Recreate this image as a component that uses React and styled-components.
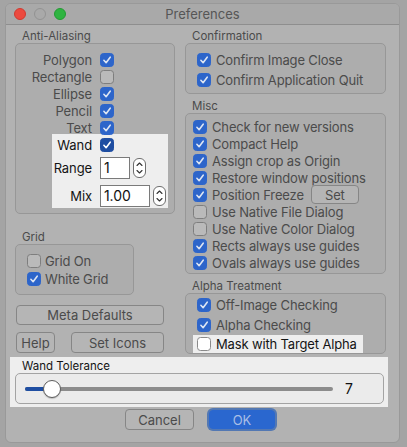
import React from 'react'
import styled, { createGlobalStyle } from 'styled-components'

const Global = createGlobalStyle`
    html, body {
        margin: 0;
        padding: 0;
        background: #a4a4a4;
        font-family: "Inter", "Liberation Sans", sans-serif;
    }
`

const Window = styled.div`
    --fg : #4b4b4b;
    --check : #2d65ca;
    --mark : #dde5f3;
    --box : #bababa;
    --boxline : #7e7e7e;

    margin : 3px 0 0 5px;
    width : 395px;
    box-sizing : border-box;
    background : #b2b2b2;
    border : 1px solid #999;
    border-radius : 6px;
    overflow : hidden;
    color : var(--fg);
`

const TitleBar = styled.div`
    position : relative;
    height : 20px;
    display : flex;
    align-items : center;
    justify-content : center;
    background : #a9a9a9;
    border-bottom : 1px solid #8e8e8e;
`

const Lights = styled.div`
    position : absolute;
    left : 8px;
    top : 4px;
    display : flex;
    gap : 8px;
`

const Light = styled.span`
    width : 12px;
    height : 12px;
    border-radius : 50%;
    box-sizing : border-box;
    background : ${p => p.$color};
    border : 1px solid ${p => p.$edge};
`

const Title = styled.span`
    font-size : 13px;
    color : #565656;
`

const Body = styled.div`
    padding : 4px 14px 12px 9px;
`

const Columns = styled.div`
    display : grid;
    grid-template-columns : 160px 201px;
    column-gap : 10px;
    align-items : start;
`

const Column = styled.div`
    display : flex;
    flex-direction : column;
`

const Legend = styled.div`
    font-size : 11.5px;
    line-height : 14px;
    padding-left : 7px;
    margin-top : ${p => p.$top || 0}px;
`

const Frame = styled.div`
    border : 1px solid #979797;
    border-radius : 5px;
    background : #adadad;
    width : ${p => p.$w ? p.$w + 'px' : 'auto'};
    box-sizing : border-box;
    padding : ${p => p.$pad};
`

const FormRow = styled.div`
    display : grid;
    grid-template-columns : ${p => p.$lw}px auto auto;
    column-gap : 8px;
    align-items : center;
    justify-content : start;
    height : ${p => p.$h || 17}px;
    margin-top : ${p => p.$top || 0}px;
    font-size : 13px;
    letter-spacing : -0.1px;
`

const FormLabel = styled.span`
    text-align : right;
`

const Spotlight = styled.div`
    --fg : #141414;
    --check : #1f4ea2;
    --mark : #ffffff;
    --box : #ffffff;
    --boxline : #8a8a8a;
    background : #eeeeee;
    color : var(--fg);
`

const AliasSpot = styled(Spotlight)`
    margin : -2px 6px 0 36px;
    padding : 2px 0 1px;
`

const Box = styled.span`
    width : 14px;
    height : 14px;
    flex : none;
    box-sizing : border-box;
    border-radius : 3.5px;
    display : inline-flex;
    align-items : center;
    justify-content : center;
    background : ${p => p.$on ? 'var(--check)' : 'var(--box)'};
    border : 1px solid ${p => p.$on ? 'var(--check)' : 'var(--boxline)'};
`

function Check({ on }) {
  return (
    <Box $on={on}>
      {on && (
        <svg width="10" height="10" viewBox="0 0 10 10">
          <path d="M1.9 5.3 L4.1 7.7 L8.2 2.2" fill="none" stroke="var(--mark)" strokeWidth="1.6" strokeLinecap="round" strokeLinejoin="round" />
        </svg>
      )}
    </Box>
  )
}

const Option = styled.div`
    display : flex;
    align-items : center;
    gap : ${p => p.$gap || 5}px;
    height : ${p => p.$h || 17}px;
    font-size : 13px;
    letter-spacing : -0.15px;
    white-space : nowrap;
`

const Field = styled.div`
    width : ${p => p.$w}px;
    height : 22px;
    box-sizing : border-box;
    border : 1px solid #7a7a7a;
    background : #fff;
    font-size : 14px;
    line-height : 20px;
    padding-left : 3px;
    color : #111;
`

const StepperBox = styled.div`
    width : 13px;
    height : 20px;
    box-sizing : border-box;
    border : 1px solid #6e6e6e;
    border-radius : 6px;
    background : #fff;
    margin-left : -5px;
    display : flex;
`

function Stepper() {
  return (
    <StepperBox>
      <svg width="11" height="18" viewBox="0 0 11 18">
        <path d="M3 6.5 L5.5 4 L8 6.5 M3 11.5 L5.5 14 L8 11.5" fill="none" stroke="#333" strokeWidth="1.1" strokeLinecap="round" strokeLinejoin="round" />
      </svg>
    </StepperBox>
  )
}

const Button = styled.div`
    width : ${p => p.$w}px;
    height : ${p => p.$h || 20}px;
    box-sizing : border-box;
    border : 1px solid #868686;
    border-radius : 4px;
    background : #b5b5b5;
    display : flex;
    align-items : center;
    justify-content : center;
    font-size : 13px;
    color : #4b4b4b;
    flex : none;
    margin-left : ${p => p.$left || 0}px;
`

const ButtonRow = styled.div`
    display : flex;
    justify-content : ${p => p.$justify || 'flex-start'};
    gap : ${p => p.$gap}px;
    margin : ${p => p.$margin};
`

const MaskSpot = styled(Spotlight)`
    margin-left : -4px;
    width : 166px;
    padding-left : 4px;
`

const ToleranceSpot = styled(Spotlight)`
    margin : 3px -3px 0 -5px;
    padding : 2px 4px 3px 5px;
`

const SliderFrame = styled.div`
    height : 31px;
    box-sizing : border-box;
    border : 1px solid #a3a3a3;
    border-radius : 5px;
    background : #ebebeb;
    display : flex;
    align-items : center;
    padding-left : 9px;
    gap : 12px;
`

const Track = styled.div`
    position : relative;
    width : 308px;
    height : 4px;
    border-radius : 2px;
    background : #8c8c8c;
`

const Fill = styled.div`
    height : 100%;
    border-radius : 2px;
    background : #1f4ea2;
`

const Thumb = styled.div`
    position : absolute;
    top : 50%;
    width : 18px;
    height : 18px;
    box-sizing : border-box;
    border-radius : 50%;
    background : #fff;
    border : 1px solid #5d5d5d;
    transform : translate(-50%, -50%);
    box-shadow : 0 1px 1px rgba(0, 0, 0, 0.2);
`

const Value = styled.span`
    font-size : 14px;
    color : #111;
`

const PrimaryButton = styled(Button)`
    background : #2a67cf;
    border-color : #2a67cf;
    color : #a9bfe6;
    box-shadow : 0 0 0 2px #5378b3;
`

function Slider({ value, max }) {
  const pos = (value / max) * 100
  return (
    <SliderFrame>
      <Track>
        <Fill style={{ width: pos + '%' }} />
        <Thumb style={{ left: pos + '%' }} />
      </Track>
      <Value>{value}</Value>
    </SliderFrame>
  )
}

const antiAlias = [
  ['Polygon', true],
  ['Rectangle', false],
  ['Ellipse', true],
  ['Pencil', true],
  ['Text', true],
]

const misc = [
  ['Check for new versions', true],
  ['Compact Help', true],
  ['Assign crop as Origin', true],
  ['Restore window positions', true],
  ['Position Freeze', true, true],
  ['Use Native File Dialog', false],
  ['Use Native Color Dialog', false],
  ['Rects always use guides', true],
  ['Ovals always use guides', true],
]

export default function App() {
  return (
    <>
      <Global />
      <Window>
        <TitleBar>
          <Lights>
            <Light $color="#ec4a3f" $edge="#d03a30" />
            <Light $color="#a9a9a9" $edge="#939393" />
            <Light $color="#2fb441" $edge="#239a33" />
          </Lights>
          <Title>Preferences</Title>
        </TitleBar>
        <Body>
          <Columns>
            <Column>
              <Legend>Anti-Aliasing</Legend>
              <Frame $pad="7px 0 5px">
                {antiAlias.map(([name, on]) => (
                  <FormRow key={name} $lw={76}>
                    <FormLabel>{name}</FormLabel>
                    <Check on={on} />
                  </FormRow>
                ))}
                <AliasSpot>
                  <FormRow $lw={40}>
                    <FormLabel>Wand</FormLabel>
                    <Check on />
                  </FormRow>
                  <FormRow $lw={40} $h={22} $top={4}>
                    <FormLabel>Range</FormLabel>
                    <Field $w={30}>1</Field>
                    <Stepper />
                  </FormRow>
                  <FormRow $lw={40} $h={22} $top={6}>
                    <FormLabel>Mix</FormLabel>
                    <Field $w={50}>1.00</Field>
                    <Stepper />
                  </FormRow>
                </AliasSpot>
              </Frame>

              <Legend $top={16}>Grid</Legend>
              <Frame $w={119} $pad="7px 0 6px 11px">
                <Option $h={18} $gap={4}><Check on={false} />Grid On</Option>
                <Option $h={18} $gap={4}><Check on />White Grid</Option>
              </Frame>

              <ButtonRow $margin="10px 0 0 1px">
                <Button $w={148}>Meta Defaults</Button>
              </ButtonRow>
              <ButtonRow $gap={16} $margin="7px 0 0 1px">
                <Button $w={39} $h={21}>Help</Button>
                <Button $w={93} $h={21}>Set Icons</Button>
              </ButtonRow>
            </Column>

            <Column>
              <Legend>Confirmation</Legend>
              <Frame $pad="6px 0 3px 11px">
                <Option $h={20}><Check on />Confirm Image Close</Option>
                <Option $h={20}><Check on />Confirm Application Quit</Option>
              </Frame>

              <Legend $top={5}>Misc</Legend>
              <Frame $pad="4px 0 2px 7px">
                {misc.map(([name, on, set]) => (
                  <Option key={name}>
                    <Check on={on} />
                    {name}
                    {set && <Button $w={48} $h={19} $left={2}>Set</Button>}
                  </Option>
                ))}
              </Frame>

              <Legend $top={5}>Alpha Treatment</Legend>
              <Frame $pad="1px 0 0 11px">
                <Option $h={20}><Check on />Off-Image Checking</Option>
                <Option $h={20}><Check on />Alpha Checking</Option>
                <MaskSpot>
                  <Option $h={18}><Check on={false} />Mask with Target Alpha</Option>
                </MaskSpot>
              </Frame>
            </Column>
          </Columns>

          <ToleranceSpot>
            <Legend>Wand Tolerance</Legend>
            <Slider value={7} max={80} />
          </ToleranceSpot>

          <ButtonRow $justify="center" $gap={15} $margin="2px 0 0 0">
            <Button $w={69} $h={21}>Cancel</Button>
            <PrimaryButton $w={66} $h={19} style={{ marginTop: 1 }}>OK</PrimaryButton>
          </ButtonRow>
        </Body>
      </Window>
    </>
  )
}
